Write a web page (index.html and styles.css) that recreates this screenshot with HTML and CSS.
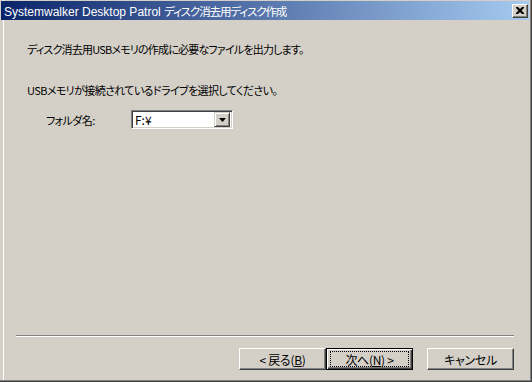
FILE: index.html
```html
<!DOCTYPE html>
<html lang="ja">
<head>
    <meta charset="UTF-8">
    <title>ディスク消去用ディスク作成</title>
    <link rel="stylesheet" href="styles.css">
</head>
<body>
    <div class="window">
        <!-- Title bar -->
        <div class="titlebar">
            <span class="title">Systemwalker Desktop Patrol <span class="title-ja">ディスク消去用ディスク作成</span></span>
            <span class="close-btn">
                <svg width="8" height="7" viewBox="0 0 8 7">
                    <path d="M0 0h2l2 2 2-2h2v1l-2.5 2.5 2.5 2.5v1h-2l-2-2-2 2h-2v-1l2.5-2.5-2.5-2.5z" fill="#000"/>
                </svg>
            </span>
        </div>

        <!-- Dialog content -->
        <div class="content">
            <p class="msg msg-first">ディスク消去用USBメモリの作成に必要なファイルを出力します。</p>
            <p class="msg msg-second">USBメモリが接続されているドライブを選択してください。</p>
            <div class="field-row">
                <span class="field-label">フォルダ名:</span>
                <div class="combo">
                    <span class="combo-value">F:¥</span>
                    <span class="combo-btn">
                        <svg width="7" height="4" viewBox="0 0 7 4"><path d="M0 0h7l-3.5 4z" fill="#000"/></svg>
                    </span>
                </div>
            </div>
        </div>

        <!-- Footer buttons -->
        <div class="footer">
            <div class="separator"></div>
            <div class="button-row">
                <button class="btn">&lt;&nbsp;戻る(<u>B</u>)</button>
                <button class="btn btn-default"><span class="focus-ring">次へ(<u>N</u>)&nbsp;&gt;</span></button>
                <button class="btn btn-cancel">キャンセル</button>
            </div>
        </div>
    </div>
</body>
</html>
```

FILE: styles.css
```css
/* Win2000 style dialog */
body {
    margin: 0;
    padding: 0;
    background: #d4d0c8;
    font-family: "Noto Sans CJK JP", "Liberation Sans", sans-serif;
    font-size: 11px;
    color: #000;
}

.window {
    width: 532px;
    height: 382px;
    box-sizing: border-box;
    background: #d4d0c8;
    padding: 1px;
    border-right: 1px solid #404040;
    border-bottom: 1px solid #404040;
    box-shadow: inset -1px -1px 0 #808080, inset 3px 0 0 #d4d0c8, inset 4px 0 0 #fff;
    display: flex;
    flex-direction: column;
}

.titlebar {
    height: 19px;
    margin-right: 1px;
    background: linear-gradient(to right, #0a246a, #a6caf0);
    display: flex;
    align-items: center;
    justify-content: space-between;
    padding: 0 1px 0 3px;
}

.title {
    color: #fff;
    font-family: "Liberation Sans", "Noto Sans CJK JP", sans-serif;
    font-size: 12px;
    white-space: nowrap;
}

.title-ja {
    font-family: "Noto Sans CJK JP", sans-serif;
    font-size: 11.5px;
    letter-spacing: -1.1px;
    font-feature-settings: "palt";
}

.close-btn {
    width: 16px;
    height: 14px;
    box-sizing: border-box;
    background: #d4d0c8;
    border-top: 1px solid #fff;
    border-left: 1px solid #fff;
    border-right: 1px solid #404040;
    border-bottom: 1px solid #404040;
    box-shadow: inset -1px -1px 0 #808080;
    display: flex;
    align-items: center;
    justify-content: center;
}

.content {
    flex: 1;
    padding: 22px 0 0 26px;
}

.msg {
    margin: 0;
    line-height: 14px;
    letter-spacing: -0.8px;
    font-feature-settings: "palt";
    white-space: nowrap;
}

.msg-second {
    margin-top: 27px;
    letter-spacing: -0.6px;
}

.field-row {
    display: flex;
    align-items: center;
    margin-top: 13px;
    padding-left: 19px;
}

.field-label {
    width: 85px;
    letter-spacing: -0.6px;
    font-feature-settings: "palt";
}

.combo {
    width: 102px;
    height: 19px;
    box-sizing: border-box;
    background: #fff;
    border-top: 1px solid #808080;
    border-left: 1px solid #808080;
    border-right: 1px solid #fff;
    border-bottom: 1px solid #fff;
    box-shadow: inset 1px 1px 0 #404040, inset -1px -1px 0 #d4d0c8;
    display: flex;
    align-items: center;
    justify-content: space-between;
    padding: 2px;
}

.combo-value {
    padding-left: 1px;
    font-size: 12px;
    line-height: 13px;
}

.combo-btn {
    width: 16px;
    height: 15px;
    box-sizing: border-box;
    background: #d4d0c8;
    border-top: 1px solid #d4d0c8;
    border-left: 1px solid #d4d0c8;
    border-right: 1px solid #404040;
    border-bottom: 1px solid #404040;
    box-shadow: inset 1px 1px 0 #fff, inset -1px -1px 0 #808080;
    display: flex;
    align-items: center;
    justify-content: center;
}

.footer {
    padding: 0 16px 10px 15px;
}

.separator {
    border-top: 1px solid #808080;
    border-bottom: 1px solid #fff;
}

.button-row {
    display: flex;
    justify-content: flex-end;
    margin-top: 11px;
}

.btn {
    width: 87px;
    height: 22px;
    box-sizing: border-box;
    margin: 0;
    padding: 0;
    background: #d4d0c8;
    font-family: "Noto Sans CJK JP", sans-serif;
    font-size: 12px;
    letter-spacing: -0.3px;
    font-feature-settings: "palt";
    color: #000;
    border-top: 1px solid #fff;
    border-left: 1px solid #fff;
    border-right: 1px solid #404040;
    border-bottom: 1px solid #404040;
    box-shadow: inset -1px -1px 0 #808080;
    display: flex;
    align-items: center;
    justify-content: center;
}

.btn u {
    text-decoration: underline;
}

.btn-default {
    border: 1px solid #000;
    box-shadow: inset 1px 1px 0 #fff, inset -1px -1px 0 #404040, inset -2px -2px 0 #808080;
}

.focus-ring {
    display: flex;
    align-items: center;
    justify-content: center;
    width: 77px;
    height: 14px;
    outline: 1px dotted #000;
}

.btn-cancel {
    margin-left: 14px;
}
```
